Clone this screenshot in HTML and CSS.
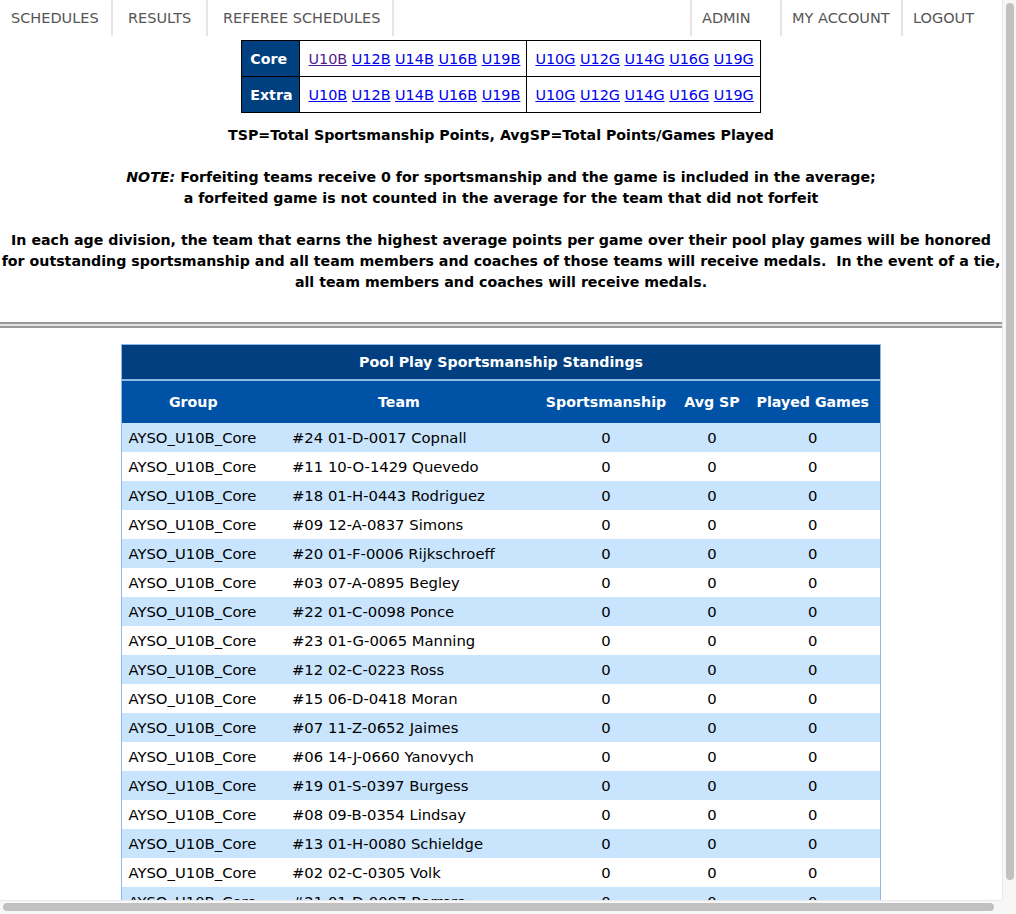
FILE: index.html
```html
<!DOCTYPE html>
<html>
<head>
<meta charset="utf-8">
<link rel="stylesheet" href="styles.css">
</head>
<body>
<div class="window">
<div class="content">
<nav class="topnav">
  <ul class="nav-left">
    <li class="schedules"><a href="#">SCHEDULES</a></li>
    <li class="results"><a href="#">RESULTS</a></li>
    <li class="referee"><a href="#">REFEREE SCHEDULES</a></li>
  </ul>
  <ul class="nav-right">
    <li class="admin"><a href="#">ADMIN</a></li>
    <li class="account"><a href="#">MY ACCOUNT</a></li>
    <li class="logout"><a href="#">LOGOUT</a></li>
  </ul>
</nav>

<table class="links">
  <tr>
    <th>Core</th>
    <td><a class="visited" href="#">U10B</a> <a href="#">U12B</a> <a href="#">U14B</a> <a href="#">U16B</a> <a href="#">U19B</a></td>
    <td><a href="#">U10G</a> <a href="#">U12G</a> <a href="#">U14G</a> <a href="#">U16G</a> <a href="#">U19G</a></td>
  </tr>
  <tr>
    <th>Extra</th>
    <td><a href="#">U10B</a> <a href="#">U12B</a> <a href="#">U14B</a> <a href="#">U16B</a> <a href="#">U19B</a></td>
    <td><a href="#">U10G</a> <a href="#">U12G</a> <a href="#">U14G</a> <a href="#">U16G</a> <a href="#">U19G</a></td>
  </tr>
</table>

<div class="notes">
  <p>TSP=Total Sportsmanship Points, AvgSP=Total Points/Games Played</p>
  <p><i>NOTE:</i> Forfeiting teams receive 0 for sportsmanship and the game is included in the average;<br>a forfeited game is not counted in the average for the team that did not forfeit</p>
  <p>In each age division, the team that earns the highest average points per game over their pool play games will be honored<br>for outstanding sportsmanship and all team members and coaches of those teams will receive medals.&nbsp; In the event of a tie,<br>all team members and coaches will receive medals.</p>
</div>

<div class="rule"></div>

<table class="standings">
  <colgroup>
    <col class="c-group"><col class="c-team"><col class="c-sp"><col class="c-avg"><col class="c-played">
  </colgroup>
  <thead>
    <tr class="title"><th colspan="5">Pool Play Sportsmanship Standings</th></tr>
    <tr class="head"><th>Group</th><th>Team</th><th>Sportsmanship</th><th>Avg SP</th><th>Played Games</th></tr>
  </thead>
  <tbody>
    <tr><td>AYSO_U10B_Core</td><td class="team">#24 01-D-0017 Copnall</td><td>0</td><td>0</td><td>0</td></tr>
    <tr><td>AYSO_U10B_Core</td><td class="team">#11 10-O-1429 Quevedo</td><td>0</td><td>0</td><td>0</td></tr>
    <tr><td>AYSO_U10B_Core</td><td class="team">#18 01-H-0443 Rodriguez</td><td>0</td><td>0</td><td>0</td></tr>
    <tr><td>AYSO_U10B_Core</td><td class="team">#09 12-A-0837 Simons</td><td>0</td><td>0</td><td>0</td></tr>
    <tr><td>AYSO_U10B_Core</td><td class="team">#20 01-F-0006 Rijkschroeff</td><td>0</td><td>0</td><td>0</td></tr>
    <tr><td>AYSO_U10B_Core</td><td class="team">#03 07-A-0895 Begley</td><td>0</td><td>0</td><td>0</td></tr>
    <tr><td>AYSO_U10B_Core</td><td class="team">#22 01-C-0098 Ponce</td><td>0</td><td>0</td><td>0</td></tr>
    <tr><td>AYSO_U10B_Core</td><td class="team">#23 01-G-0065 Manning</td><td>0</td><td>0</td><td>0</td></tr>
    <tr><td>AYSO_U10B_Core</td><td class="team">#12 02-C-0223 Ross</td><td>0</td><td>0</td><td>0</td></tr>
    <tr><td>AYSO_U10B_Core</td><td class="team">#15 06-D-0418 Moran</td><td>0</td><td>0</td><td>0</td></tr>
    <tr><td>AYSO_U10B_Core</td><td class="team">#07 11-Z-0652 Jaimes</td><td>0</td><td>0</td><td>0</td></tr>
    <tr><td>AYSO_U10B_Core</td><td class="team">#06 14-J-0660 Yanovych</td><td>0</td><td>0</td><td>0</td></tr>
    <tr><td>AYSO_U10B_Core</td><td class="team">#19 01-S-0397 Burgess</td><td>0</td><td>0</td><td>0</td></tr>
    <tr><td>AYSO_U10B_Core</td><td class="team">#08 09-B-0354 Lindsay</td><td>0</td><td>0</td><td>0</td></tr>
    <tr><td>AYSO_U10B_Core</td><td class="team">#13 01-H-0080 Schieldge</td><td>0</td><td>0</td><td>0</td></tr>
    <tr><td>AYSO_U10B_Core</td><td class="team">#02 02-C-0305 Volk</td><td>0</td><td>0</td><td>0</td></tr>
    <tr><td>AYSO_U10B_Core</td><td class="team">#21 01-D-0097 Barrera</td><td>0</td><td>0</td><td>0</td></tr>
  </tbody>
</table>
</div>
<div class="vbar"><div class="vthumb"></div></div>
<div class="hbar"><div class="hthumb"></div></div>
<div class="corner"></div>
</div>
</body>
</html>
```
FILE: styles.css
```css
html, body {
  margin: 0;
  padding: 0;
  overflow: hidden;
}
body {
  font-family: Verdana, "DejaVu Sans", sans-serif;
  font-size: 14px;
  color: #000;
  background: #fff;
}
.window {
  display: grid;
  grid-template-columns: 1002px 14px;
  grid-template-rows: 900px 14px;
  width: 1016px;
  height: 914px;
}
.content {
  overflow: hidden;
  width: 1002px;
  height: 900px;
}
.vbar {
  background: #f7f7f7;
  border-left: 1px solid #e8e8e8;
  padding: 3px 2px 20px 3px;
  display: flex;
}
.vthumb {
  flex: 1;
  background: #c1c1c1;
  border-radius: 4px;
}
.hbar {
  background: #f7f7f7;
  border-top: 1px solid #e8e8e8;
  padding: 2px 8px 3px 3px;
  display: flex;
}
.hthumb {
  flex: 1;
  background: #c1c1c1;
  border-radius: 4px;
}
.corner {
  background: #f7f7f7;
}

.topnav {
  display: flex;
  justify-content: space-between;
  height: 36px;
}
.topnav ul {
  display: flex;
  list-style: none;
  margin: 0;
  padding: 0;
}
.topnav li {
  box-sizing: border-box;
  display: flex;
  align-items: center;
  height: 36px;
  white-space: nowrap;
}
.topnav a {
  color: #555;
  text-decoration: none;
  font-size: 14.5px;
}
.nav-left li {
  padding-left: 15px;
  border-right: 2px solid #eae2e3;
}
.nav-left li.schedules { width: 113px; padding-left: 11px; }
.nav-left li.results { width: 95px; }
.nav-left li.referee { width: 186px; }
.nav-right li {
  padding-left: 10px;
  border-left: 2px solid #eae2e3;
}
.nav-right li.admin { width: 90px; }
.nav-right li.account { width: 121px; }
.nav-right li.logout { width: 101px; }

.links {
  border-collapse: collapse;
  margin: 4px auto 0;
  border: 1px solid #000;
}
.links th {
  background: #01407f;
  color: #fff;
  font-weight: bold;
  font-size: 14.2px;
  text-align: left;
  padding: 0 7px 0 8px;
  height: 35px;
  border: 1px solid #000;
}
.links td {
  border: 1px solid #000;
  padding: 0 6px 0 8px;
  height: 35px;
  white-space: nowrap;
  font-size: 14.4px;
}
.links a {
  color: #0000ee;
  text-decoration: underline;
}
.links a.visited {
  color: #551a8b;
}

.notes {
  font-weight: bold;
  font-size: 14.2px;
  text-align: center;
  line-height: 21px;
  margin-top: 12px;
}
.notes p {
  margin: 0 0 21px;
  white-space: nowrap;
}
.notes p:last-child {
  margin-bottom: 0;
}
.rule {
  margin-top: 29px;
  height: 2px;
  border-top: 2px solid #9a9a9a;
  border-bottom: 2px solid #9a9a9a;
  background: #e4e4e4;
}

.standings {
  border-collapse: collapse;
  margin: 16px auto 0;
  width: 758px;
  table-layout: fixed;
  border: 1px solid #8fb8e6;
}
.c-group { width: 142px; }
.c-team { width: 270px; }
.c-sp { width: 144px; }
.c-avg { width: 68px; }
.c-played { width: 134px; }
.standings th {
  font-size: 14.2px;
}
.standings .title th {
  background: #013f80;
  color: #fff;
  height: 34px;
  padding: 0;
  border-bottom: 2px solid #8fb8e6;
}
.standings .head th {
  background: #0052a6;
  color: #fff;
  height: 42px;
  padding: 0;
  white-space: nowrap;
}
.standings td {
  height: 29px;
  padding: 0;
  text-align: center;
  white-space: nowrap;
  font-size: 14.8px;
}
.standings td:first-child {
  text-align: left;
  padding-left: 6px;
}
.standings td.team {
  text-align: left;
  padding-left: 28px;
}
.standings tbody tr:nth-child(odd) td {
  background: #c9e5fd;
}
.standings tbody tr:nth-child(even) td {
  background: #fff;
}
```
